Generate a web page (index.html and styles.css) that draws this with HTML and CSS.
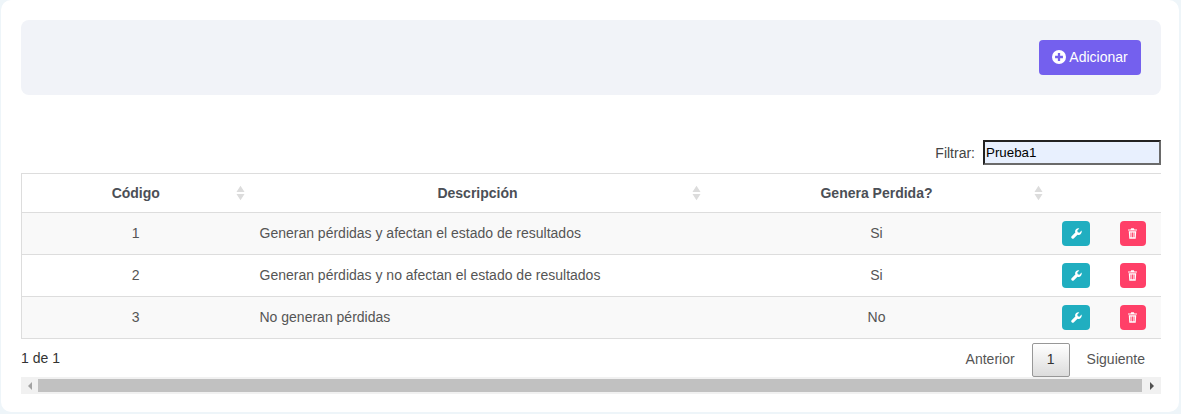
FILE: index.html
```html
<!DOCTYPE html>
<html lang="es">
<head>
<meta charset="utf-8">
<title>Tipos</title>
<link rel="stylesheet" href="styles.css">
</head>
<body>
<div class="card">
  <div class="toolbar">
    <button class="add-btn" type="button">
      <svg class="add-icon" viewBox="0 0 16 16"><circle cx="8" cy="8" r="8" fill="#fff"/><path d="M8 3.500v9M3.500 8h9" stroke="#7460ee" stroke-width="2.600"/></svg>
      <span>Adicionar</span>
    </button>
  </div>
  <div class="filter-row">
    <label class="filter-label" for="f">Filtrar:</label>
    <input class="filter-input" id="f" value="Prueba1">
  </div>
  <div class="table-wrap">
    <table class="data-table">
      <thead>
        <tr>
          <th class="c1">Código<svg class="sort" viewBox="0 0 10 16"><path d="M5 0l4.500 7H.5zM5 16L.5 9h9z"/></svg></th>
          <th class="c2">Descripción<svg class="sort" viewBox="0 0 10 16"><path d="M5 0l4.500 7H.5zM5 16L.5 9h9z"/></svg></th>
          <th class="c3">Genera Perdida?<svg class="sort" viewBox="0 0 10 16"><path d="M5 0l4.500 7H.5zM5 16L.5 9h9z"/></svg></th>
          <th class="c4"></th>
          <th class="c5"></th>
        </tr>
      </thead>
      <tbody>
        <tr class="odd">
          <td class="center">1</td><td>Generan pérdidas y afectan el estado de resultados</td><td class="center">Si</td>
          <td class="act-cell"><span class="act teal"><svg class="wrench" viewBox="0 0 16 16"><path d="M15.300 3.800l-3 3-2.500-.7-.7-2.500 3-3a4.600 4.600 0 0 0-5.800 6L.9 12a2.200 2.200 0 0 0 3.100 3.100l5.400-5.400a4.600 4.600 0 0 0 5.900-5.900z" fill="#fff"/></svg></span></td>
          <td class="act-cell"><span class="act red"><svg class="trash" viewBox="0 0 14 16"><path d="M5 0h4l1 1.800h4v1.700H0V1.800h4zM1.200 4.600h11.600L12 16H2zM3.900 6.500v7.500h1.400V6.500zm2.400 0v7.500h1.400V6.500zm2.400 0v7.500h1.400V6.500z" fill="#fff" fill-rule="evenodd"/></svg></span></td>
        </tr>
        <tr>
          <td class="center">2</td><td>Generan pérdidas y no afectan el estado de resultados</td><td class="center">Si</td>
          <td class="act-cell"><span class="act teal"><svg class="wrench" viewBox="0 0 16 16"><path d="M15.300 3.800l-3 3-2.500-.7-.7-2.500 3-3a4.600 4.600 0 0 0-5.800 6L.9 12a2.200 2.200 0 0 0 3.100 3.100l5.400-5.400a4.600 4.600 0 0 0 5.900-5.900z" fill="#fff"/></svg></span></td>
          <td class="act-cell"><span class="act red"><svg class="trash" viewBox="0 0 14 16"><path d="M5 0h4l1 1.800h4v1.700H0V1.800h4zM1.200 4.600h11.600L12 16H2zM3.900 6.500v7.500h1.400V6.500zm2.400 0v7.500h1.400V6.500zm2.400 0v7.500h1.400V6.500z" fill="#fff" fill-rule="evenodd"/></svg></span></td>
        </tr>
        <tr class="odd">
          <td class="center">3</td><td>No generan pérdidas</td><td class="center">No</td>
          <td class="act-cell"><span class="act teal"><svg class="wrench" viewBox="0 0 16 16"><path d="M15.300 3.800l-3 3-2.500-.7-.7-2.500 3-3a4.600 4.600 0 0 0-5.800 6L.9 12a2.200 2.200 0 0 0 3.100 3.100l5.400-5.400a4.600 4.600 0 0 0 5.900-5.900z" fill="#fff"/></svg></span></td>
          <td class="act-cell"><span class="act red"><svg class="trash" viewBox="0 0 14 16"><path d="M5 0h4l1 1.800h4v1.700H0V1.800h4zM1.200 4.600h11.600L12 16H2zM3.900 6.500v7.500h1.400V6.500zm2.400 0v7.500h1.400V6.500zm2.400 0v7.500h1.400V6.500z" fill="#fff" fill-rule="evenodd"/></svg></span></td>
        </tr>
      </tbody>
    </table>
  </div>
  <div class="pager-row">
    <span class="page-info">1 de 1</span>
    <div class="pager">
      <span class="page-link">Anterior</span>
      <span class="page-current">1</span>
      <span class="page-link">Siguiente</span>
    </div>
  </div>
  <div class="scrollbar">
    <span class="arrow-l"></span>
    <div class="thumb"></div>
    <span class="arrow-r"></span>
  </div>
</div>
</body>
</html>
```
FILE: styles.css
```css
* { box-sizing: border-box; }
html, body { margin: 0; height: 100%; }
body { background: #eef5f9; font-family: "Liberation Sans", Arial, sans-serif; font-size: 14px; color: #212529; overflow: hidden; }
.card { background: #fff; height: 412px; margin: 0 2px 0 1px; padding: 20px 18px 0 20px; border-radius: 10px; }
.toolbar { height: 75px; background: #f1f3f8; border-radius: 8px; display: flex; justify-content: flex-end; align-items: center; padding-right: 20px; }
.add-btn { width: 102px; height: 35px; display: flex; align-items: center; justify-content: center; gap: 3px; background: #7460ee; color: #fff; border: 0; border-radius: 4px; font: 14px "Liberation Sans", Arial, sans-serif; padding: 0 0 2px; }
.add-icon { width: 14px; height: 14px; }
.filter-row { display: flex; justify-content: flex-end; align-items: center; gap: 8px; margin-top: 45px; height: 25px; }
.filter-label { color: #444; }
.filter-input { width: 178px; height: 25px; background: #e8f0fe; border: 2px solid; border-color: #222 #6a6a6a #6a6a6a #222; border-radius: 0; padding: 0 1px; font: 13.333px "Liberation Sans", Arial, sans-serif; color: #000; }
.table-wrap { margin-top: 8px; overflow: hidden; }
.data-table { width: 1141px; border-collapse: collapse; table-layout: fixed; border-left: 1px solid #ddd; color: #555; }
.data-table th { height: 39px; position: relative; font-weight: 700; color: #4b4f56; font-size: 14px; border-top: 1px solid #ddd; border-bottom: 1px solid #ddd; padding: 0; }
.data-table td { height: 42px; padding: 0 10px 2px; border-bottom: 1px solid #ddd; }
.center { text-align: center; }
.data-table .act-cell { padding: 0; text-align: center; }
.odd { background: #f9f9f9; }
.c1 { width: 228px; }
.c2 { width: 456px; }
.c3 { width: 342px; }
.c4 { width: 57px; }
.c5 { width: 58px; }
.sort { position: absolute; right: 5px; top: 11px; width: 9px; height: 16px; fill: #dcdcdc; }
.act { display: inline-flex; height: 25px; border-radius: 4px; align-items: center; justify-content: center; vertical-align: middle; }
.wrench { width: 11px; height: 11px; }
.trash { width: 9px; height: 11px; }
.teal { width: 28px; background: #20aec0; }
.red { width: 26px; margin-right: 2px; background: #ff4068; }
.pager-row { display: flex; justify-content: space-between; align-items: flex-start; height: 38px; }
.page-info { margin-top: 11px; color: #333; }
.pager { display: flex; align-items: center; margin-top: 4px; }
.page-link { padding: 0 17px; color: #555; line-height: 32px; height: 34px; }
.page-link:last-child { padding-right: 16px; }
.page-current { width: 38px; height: 34px; border: 1px solid #979797; border-radius: 2px; background: linear-gradient(#fff, #dcdcdc); text-align: center; line-height: 30px; color: #333; }
.scrollbar { height: 17px; width: 1140px; background: #f1f1f1; display: flex; align-items: center; }
.thumb { flex: 1; height: 13px; background: #c1c1c1; }
.arrow-l { width: 17px; display: flex; justify-content: center; }
.arrow-r { width: 19px; display: flex; justify-content: center; }
.arrow-l::before { content: ""; border: 4px solid transparent; border-right: 4px solid #a3a3a3; border-left: 0; }
.arrow-r::before { content: ""; border: 4px solid transparent; border-left: 4px solid #505050; border-right: 0; }
```
